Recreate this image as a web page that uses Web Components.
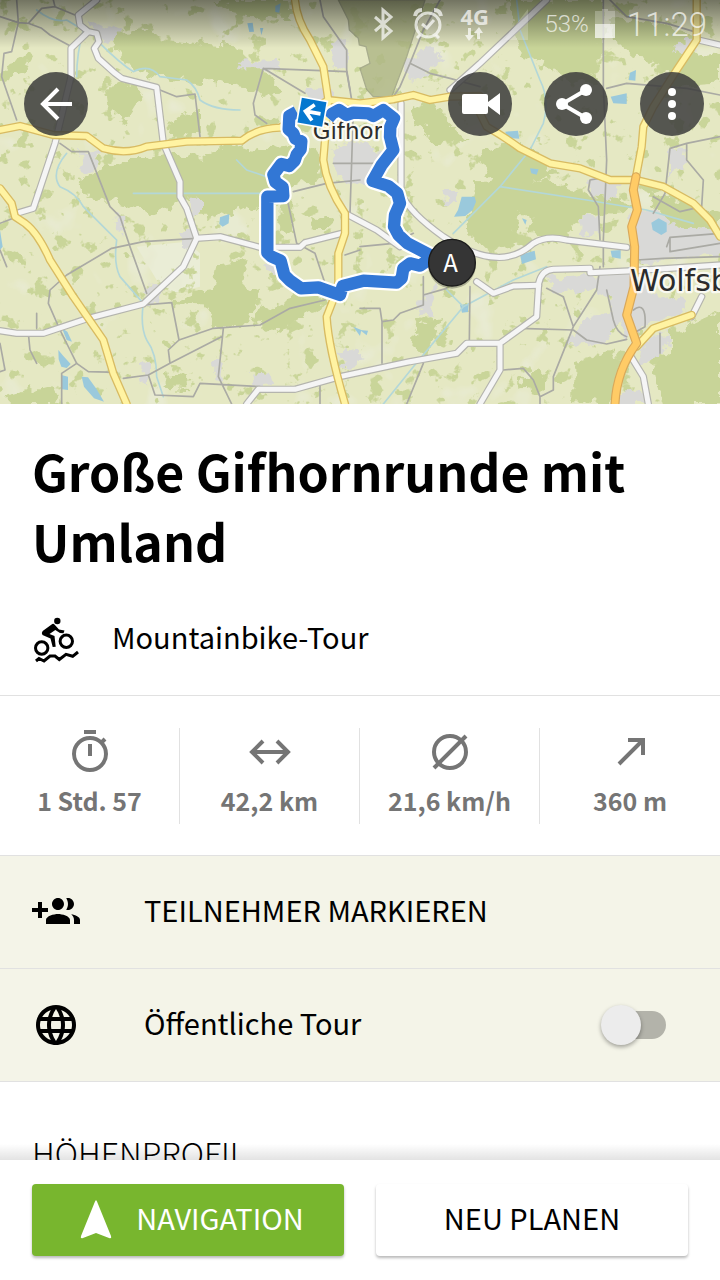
<!DOCTYPE html>
<html lang="de">
<head>
<meta charset="utf-8">
<meta name="viewport" content="width=device-width, initial-scale=1">
<title>Große Gifhornrunde mit Umland</title>
<style>
  html, body {
    height: 100%;
    margin: 0;
  }

  body {
    font-family: "Noto Sans CJK SC", "Noto Sans", sans-serif;
    font-size: 29px;
    color: #000;
    background: #fff;
  }
</style>
</head>
<body>

<tour-page>
  <tour-map slot="map"></tour-map>
  <status-bar slot="status"></status-bar>

  <round-button slot="back" label="Zurück">
    <svg viewBox="0 0 64 64" fill="none" stroke="#fff" stroke-width="4"><path d="M48 32H19M34 17L19 32L34 47"/></svg>
  </round-button>
  <round-button slot="actions" label="Video">
    <svg viewBox="0 0 64 64" fill="#fff"><path d="M16 22H38a2 2 0 0 1 2 2V30L52 21V43L40 34V40a2 2 0 0 1-2 2H16a2 2 0 0 1-2-2V24a2 2 0 0 1 2-2z"/></svg>
  </round-button>
  <round-button slot="actions" label="Teilen">
    <svg viewBox="0 0 64 64" fill="#fff"><path d="M42 18L18 32L42 46" fill="none" stroke="#fff" stroke-width="4"/><circle cx="42" cy="18" r="6"/><circle cx="18" cy="32" r="6"/><circle cx="42" cy="46" r="6"/></svg>
  </round-button>
  <round-button slot="actions" label="Mehr">
    <svg viewBox="0 0 64 64" fill="#fff"><circle cx="32" cy="20" r="4"/><circle cx="32" cy="32" r="4"/><circle cx="32" cy="44" r="4"/></svg>
  </round-button>

  <tour-heading>Große Gifhornrunde mit Umland</tour-heading>

  <list-row compact>
    <svg slot="icon" viewBox="0 0 48 48" fill="none" stroke="#000" stroke-width="3">
      <circle cx="9.700" cy="33" r="6.200"/>
      <circle cx="34.300" cy="26.300" r="6.200"/>
      <circle cx="25.300" cy="6" r="3.200" fill="#000" stroke="none"/>
      <path d="M20.300 9L10.700 16Q9 18 10.500 20L18.500 23.500L20.700 32L23.700 31.700L22.500 21L17.500 19L23.300 15L28 18L31.500 18.300L32.500 15.500L27 14.500L22.700 9.700Q21.500 8.300 20.300 9Z" fill="#000" stroke="none"/>
      <path d="M4 46L7 43.500L12 46L18 41L23 41L27.300 44.500L34 39.300L40.700 41.300L46 37"/>
    </svg>
    Mountainbike-Tour
  </list-row>

  <stat-bar>
    <stat-item>
      <svg slot="icon" viewBox="0 0 48 48" fill="none" stroke="#757575" stroke-width="4"><circle cx="24" cy="26" r="16"/><path d="M18 4H30M24 16V28M35 15L39 11"/></svg>
      1 Std. 57
    </stat-item>
    <stat-item>
      <svg slot="icon" viewBox="0 0 48 48" fill="none" stroke="#757575" stroke-width="4"><path d="M7 24H41M17 13L6 24L17 35M31 13L42 24L31 35"/></svg>
      42,2 km
    </stat-item>
    <stat-item>
      <svg slot="icon" viewBox="0 0 48 48" fill="none" stroke="#757575" stroke-width="4"><circle cx="24" cy="24" r="16"/><path d="M8 40L40 8"/></svg>
      21,6 km/h
    </stat-item>
    <stat-item>
      <svg slot="icon" viewBox="0 0 48 48" fill="none" stroke="#757575" stroke-width="4"><path d="M13 36L36 13M22 12H37V27"/></svg>
      360 m
    </stat-item>
  </stat-bar>

  <list-row action tinted>
    <svg slot="icon" viewBox="0 0 24 24"><path d="M8 10H5V7H3v3H0v2h3v3h2v-3h3v-2zm10 1c1.660 0 2.990-1.340 2.990-3S19.660 5 18 5c-.32 0-.63.050-.91.140.57.810.9 1.790.9 2.860s-.34 2.040-.9 2.860c.28.090.59.140.91.140zm-5 0c1.660 0 2.990-1.340 2.990-3S14.660 5 13 5c-1.660 0-3 1.340-3 3s1.340 3 3 3zm6.620 2.160c.83.730 1.380 1.660 1.380 2.840v2h3v-2c0-1.540-2.370-2.490-4.380-2.840zM13 13c-2 0-6 1-6 3v2h12v-2c0-2-4-3-6-3z"/></svg>
    TEILNEHMER MARKIEREN
  </list-row>

  <switch-row label="Öffentliche Tour">
    <svg slot="icon" viewBox="0 0 24 24"><path d="M11.990 2C6.470 2 2 6.480 2 12s4.470 10 9.990 10C17.520 22 22 17.520 22 12S17.520 2 11.990 2zm6.930 6h-2.950c-.32-1.250-.78-2.450-1.380-3.560 1.840.63 3.370 1.910 4.330 3.560zM12 4.040c.83 1.200 1.480 2.530 1.910 3.960h-3.820c.43-1.430 1.080-2.760 1.910-3.960zM4.260 14C4.100 13.360 4 12.690 4 12s.1-1.360.26-2h3.380c-.080.660-.14 1.320-.14 2 0 .68.060 1.340.14 2H4.260zm.82 2h2.950c.32 1.250.78 2.450 1.380 3.560-1.840-.63-3.370-1.900-4.330-3.560zm2.950-8H5.080c.96-1.660 2.490-2.930 4.330-3.560C8.810 5.550 8.350 6.750 8.030 8zM12 19.960c-.83-1.200-1.480-2.530-1.910-3.960h3.820c-.43 1.430-1.080 2.760-1.910 3.960zM14.340 14H9.660c-.090-.66-.16-1.320-.16-2 0-.68.070-1.350.16-2h4.680c.090.650.16 1.320.16 2 0 .68-.070 1.340-.16 2zm.25 5.560c.6-1.110 1.060-2.310 1.380-3.560h2.950c-.96 1.650-2.490 2.930-4.330 3.560zM16.360 14c.080-.66.14-1.320.14-2 0-.68-.060-1.340-.14-2h3.380c.16.640.26 1.310.26 2s-.1 1.360-.26 2h-3.380z"/></svg>
  </switch-row>

  <section-title>HÖHENPROFIL</section-title>

  <action-button slot="footer" primary>
    <svg slot="icon" viewBox="0 0 48 48" fill="#fff"><path d="M24 4Q25 5 26 8L39 40Q40 43 37 42L24 37L11 42Q8 43 9 40L22 8Q23 5 24 4z"/></svg>
    NAVIGATION
  </action-button>
  <action-button slot="footer">NEU PLANEN</action-button>
</tour-page>

<script>
function attach(el, html) {
  el.attachShadow({mode: 'open'}).innerHTML = html;
}

class TourPage extends HTMLElement {
  constructor() {
    super();
    attach(this, `
      <style>
        :host {
          display: flex;
          flex-direction: column;
          height: 100vh;
        }

        main {
          flex: 1;
          min-height: 0;
          overflow: hidden;
        }

        header {
          position: relative;
        }

        .overlay {
          position: absolute;
          top: 0;
          left: 0;
          right: 0;
        }

        nav {
          display: flex;
          justify-content: space-between;
          padding: 24px 16px 0 24px;
        }

        .actions {
          display: flex;
          gap: 32px;
        }

        footer {
          position: relative;
          display: grid;
          grid-template-columns: 1fr 1fr;
          gap: 32px;
          padding: 24px 32px;
          background: #fff;
        }

        footer::before {
          content: "";
          position: absolute;
          bottom: 100%;
          left: 0;
          right: 0;
          height: 16px;
          background: linear-gradient(rgba(0, 0, 0, 0), rgba(0, 0, 0, .11));
        }
      </style>
      <main>
        <header>
          <slot name="map"></slot>
          <div class="overlay">
            <slot name="status"></slot>
            <nav>
              <slot name="back"></slot>
              <div class="actions"><slot name="actions"></slot></div>
            </nav>
          </div>
        </header>
        <slot></slot>
      </main>
      <footer><slot name="footer"></slot></footer>
    `);
  }
}

class StatusBar extends HTMLElement {
  constructor() {
    super();
    attach(this, `
      <style>
        :host {
          display: flex;
          justify-content: flex-end;
          align-items: center;
          gap: 16px;
          height: 48px;
          padding-right: 13px;
          font-family: Roboto, sans-serif;
          color: rgba(255, 255, 255, .7);
          background: linear-gradient(rgba(0, 0, 0, .5), rgba(0, 0, 0, 0));
        }

        svg {
          display: block;
          height: 48px;
          fill: currentColor;
        }

        .network {
          font: bold 22px/20px "Open Sans", sans-serif;
          width: 28px;
          text-align: center;
        }

        .network svg {
          height: 16px;
          margin: 0 auto;
        }

        .battery {
          display: flex;
          align-items: center;
          gap: 6px;
          font-size: 24px;
          font-weight: 300;
        }

        .clock {
          font-size: 33px;
          font-weight: 300;
          margin-left: -4px;
        }
      </style>
      <svg viewBox="0 0 24 48" width="24"><path d="M3 17L19 31L11 38V10L19 17L3 31" fill="none" stroke="currentColor" stroke-width="3"/></svg>
      <svg viewBox="0 0 32 48" width="32" fill="none">
        <g fill="none" stroke="currentColor" stroke-width="3"><circle cx="16" cy="25" r="12"/><path d="M10 24L15 28L22 20"/><path d="M3 16Q4 10 10 10M22 10Q28 10 29 16" stroke-width="4"/><path d="M8 35L5 38M24 35L27 38"/></g>
      </svg>
      <div class="network">4G
        <svg viewBox="0 0 20 16" width="20"><path d="M4 2H7V9H10L5 15L1 9H4zM13 13V7H10L15 1L19 7H16V13z"/></svg>
      </div>
      <svg viewBox="0 0 24 48" width="24"><path d="M24 9V40H0z" opacity=".3"/></svg>
      <div class="battery">53%
        <svg viewBox="0 0 20 48" width="20"><path d="M7 9H13V11H20V24H0V11H7z" opacity=".35"/><path d="M0 24H20V38H0z"/></svg>
      </div>
      <div class="clock">11:29</div>
    `);
  }
}

class RoundButton extends HTMLElement {
  constructor() {
    super();
    attach(this, `
      <style>
        :host {
          display: block;
        }

        button {
          display: block;
          width: 64px;
          height: 64px;
          padding: 0;
          border: none;
          border-radius: 50%;
          background: rgba(60, 60, 60, .85);
          cursor: pointer;
        }

        ::slotted(svg) {
          display: block;
          width: 64px;
          height: 64px;
        }
      </style>
      <button type="button"><slot></slot></button>
    `);
  }

  connectedCallback() {
    this.shadowRoot.querySelector('button').setAttribute('aria-label', this.getAttribute('label'));
  }
}

class TourHeading extends HTMLElement {
  constructor() {
    super();
    attach(this, `
      <style>
        :host {
          display: block;
          padding: 31px 32px 8px;
        }

        h1 {
          margin: 0;
          font-size: 50px;
          line-height: 70px;
          font-weight: bold;
        }
      </style>
      <h1><slot></slot></h1>
    `);
  }
}

const rowStyle = `
  :host {
    display: block;
    border-bottom: 1px solid #e1e1e1;
  }

  .row {
    box-sizing: border-box;
    display: flex;
    align-items: center;
    gap: 64px;
    width: 100%;
    min-height: 112px;
    padding: 0 54px 0 32px;
    border: none;
    background: none;
    font: inherit;
    color: inherit;
    text-align: left;
  }

  .text {
    flex: 1;
    padding-bottom: 6px;
  }

  ::slotted(svg) {
    flex: none;
    width: 48px;
    height: 48px;
  }
`;

class ListRow extends HTMLElement {
  connectedCallback() {
    if(this.shadowRoot) {
      return;
    }

    // rows that trigger something are buttons, the others plain boxes
    let tag = this.hasAttribute('action') ? 'button' : 'div';
    attach(this, `
      <style>
        ${rowStyle}
        :host([tinted]) {
          background: #f4f4e8;
        }

        :host([compact]) .row {
          gap: 32px;
        }
      </style>
      <${tag} class="row"><slot name="icon"></slot><span class="text"><slot></slot></span></${tag}>
    `);
  }
}

class SwitchRow extends HTMLElement {
  connectedCallback() {
    if(this.shadowRoot) {
      return;
    }

    attach(this, `
      <style>
        ${rowStyle}
        :host {
          background: #f4f4e8;
        }

        input {
          appearance: none;
          position: relative;
          width: 65px;
          height: 40px;
          margin: 0;
          cursor: pointer;
        }

        input::before {
          content: "";
          position: absolute;
          inset: 6px 0 6px 8px;
          border-radius: 14px;
          background: #b3b3aa;
        }

        input::after {
          content: "";
          position: absolute;
          top: 0;
          left: 0;
          width: 40px;
          height: 40px;
          border-radius: 50%;
          background: #ececec;
          box-shadow: 0 2px 4px rgba(0, 0, 0, .35);
        }

        input:checked::after {
          left: 25px;
          background: #78b62e;
        }
      </style>
      <div class="row">
        <slot name="icon"></slot>
        <label class="text" for="toggle">${this.getAttribute('label')}</label>
        <input type="checkbox" id="toggle" role="switch">
      </div>
    `);
  }
}

class StatBar extends HTMLElement {
  constructor() {
    super();
    attach(this, `
      <style>
        :host {
          display: grid;
          grid-template-columns: repeat(4, 1fr);
          padding: 32px 0 31px;
          border-bottom: 1px solid #e1e1e1;
        }

        ::slotted(:not(:last-child)) {
          border-right: 1px solid #e1e1e1;
        }
      </style>
      <slot></slot>
    `);
  }
}

class StatItem extends HTMLElement {
  constructor() {
    super();
    attach(this, `
      <style>
        :host {
          display: flex;
          flex-direction: column;
          align-items: center;
          font-size: 25px;
          line-height: 48px;
          font-weight: bold;
          color: #757575;
          white-space: nowrap;
        }

        ::slotted(svg) {
          width: 48px;
          height: 48px;
        }
      </style>
      <slot name="icon"></slot>
      <span><slot></slot></span>
    `);
  }
}

class SectionTitle extends HTMLElement {
  constructor() {
    super();
    attach(this, `
      <style>
        :host {
          display: block;
          padding: 46px 32px;
        }

        h2 {
          margin: 0;
          font-size: 32px;
          line-height: 48px;
          font-weight: 300;
        }
      </style>
      <h2><slot></slot></h2>
    `);
  }
}

class ActionButton extends HTMLElement {
  constructor() {
    super();
    attach(this, `
      <style>
        :host {
          display: block;
        }

        button {
          display: flex;
          align-items: center;
          justify-content: center;
          gap: 16px;
          width: 100%;
          height: 72px;
          padding: 0;
          border: none;
          border-radius: 4px;
          background: #fff;
          box-shadow: 0 2px 3px rgba(0, 0, 0, .28);
          font: inherit;
          color: #000;
          cursor: pointer;
        }

        :host([primary]) button {
          background: #78b62e;
          color: #fff;
        }

        .text {
          padding-bottom: 6px;
        }

        ::slotted(svg) {
          width: 48px;
          height: 48px;
        }
      </style>
      <button type="button"><slot name="icon"></slot><span class="text"><slot></slot></span></button>
    `);
  }
}

// Map geometry, in units of a 2160 x 1212 canvas
const forests = [
  '340,100 420,92 520,122 600,130 720,140 740,180 820,230 850,285 800,290 740,262 640,240 600,252 480,228 400,215 350,150',
  '320,265 400,245 430,290 390,340 370,370 330,330',
  '230,540 380,480 440,480 500,460 600,470 680,430 760,450 900,430 960,470 950,540 860,560 800,640 740,620 620,660 560,600 460,640 380,610 260,590',
  '10,190 100,165 70,215 10,240',
  '650,790 740,780 730,850 780,880 740,975 650,985 620,920 520,915 560,885 640,870',
  '790,930 870,890 940,870 980,910 890,960 830,1000 750,960',
  '500,1120 560,1125 565,1165 490,1160',
  '20,1190 150,1155 180,1212 20,1212',
  '640,0 860,0 880,60 800,50 700,40',
  '840,600 880,600 880,700 830,690',
  '930,640 1000,650 1000,690 940,690',
  '500,360 600,330 600,400 520,410',
  '1530,0 1810,0 1810,80 1800,200 1770,260 1700,230 1640,200 1560,170',
  '1830,50 1960,70 2080,110 2030,190 1900,175 1840,120',
  '1960,180 2160,160 2160,250 2020,260',
  '1420,550 1640,540 1780,590 1900,610 1870,640 1740,650 1680,730 1600,700 1590,640 1550,640 1540,740 1460,750 1400,690',
  '1940,590 2040,600 2160,640 2160,690 2020,680',
  '1440,450 1560,430 1680,520 1480,575',
  '2010,1000 2160,930 2160,1212 1990,1212 1960,1100 2010,1060',
  '1720,1090 1830,1060 1870,1090 1830,1212 1720,1200',
  '1250,970 1320,960 1280,1060 1240,1040',
  '1560,1130 1640,1110 1640,1180 1570,1170',
  '1230,330 1290,300 1330,350 1400,420 1300,430'
];

const towns = [
  '260,60 360,90 350,115 290,130', '240,450 290,455 290,510 245,515', '570,590 600,590 600,650 575,650',
  '540,690 580,690 575,740 540,735', '440,850 485,860 480,905 440,915', '710,185 830,180 840,205 720,205',
  '990,130 1040,125 1050,210 1000,200', '920,265 980,260 1010,330 920,310', '1000,440 1100,420 1170,500 1080,560 1010,530',
  '790,790 840,785 830,820 790,815', '420,1090 450,1090 450,1150 425,1140', '640,1080 665,1080 665,1150 640,1140',
  '750,1130 810,1120 820,1150 760,1160', '1020,1050 1070,1040 1090,1090 1030,1110', '340,650 370,650 370,700 345,690',
  '1210,180 1290,150 1330,170 1260,240 1210,230', '1330,570 1380,570 1370,610 1335,610', '1740,650 1800,650 1800,700 1745,700',
  '1900,650 1960,620 2030,680 2160,690 2160,760 1920,790 1900,730', '1770,540 1860,545 1840,600 1780,590',
  '1640,830 1900,820 1960,880 2040,900 2060,940 1960,960 1880,1010 1860,960 1810,1030 1700,1040 1740,960 1840,940 1830,880 1720,870 1650,880',
  '1930,1010 2010,1000 1990,1070 1920,1080',
  '2010,440 2060,440 2050,500 2010,530', '2030,130 2080,120 2080,160 2040,165', '1270,880 1310,860 1290,950 1260,950',
  '1860,1180 1930,1170 1940,1212 1860,1212'
];

const lakes = [
  '660,652 688,642 686,670 668,680 658,672', '175,1050 190,1068 212,1092 200,1104 184,1100 176,1078', '184,1125 204,1130 204,1170 186,1168',
  '245,1130 264,1132 290,1168 312,1205 282,1195 252,1160', '742,70 758,68 762,95 748,96', '780,84 790,84 784,106',
  '186,985 202,995 216,1025 200,1020', '0,690 8,740 0,750', '1060,980 1084,990 1080,1008',
  '1385,590 1424,590 1428,605 1418,630 1396,648 1362,650 1374,630', '1954,668 1976,655 2000,668 2000,695 1984,705 1958,690',
  '1560,764 1604,752 1608,778 1566,792', '1590,505 1616,508 1610,524 1594,520', '1516,395 1554,392 1558,416 1520,414',
  '1832,290 1880,280 1880,312 1840,310', '1890,218 1908,210 1906,242 1886,240', '1832,752 1862,750 1862,776 1836,772',
  '1380,915 1406,912 1404,936 1386,938', '1566,655 1580,660 1576,674', '1080,990 1104,992 1100,1006', '826,18 842,10 838,38 826,36'
];

const streams = [
  'M110 30Q160 70 200 60L250 90Q230 160 230 230M300 130Q360 190 400 215Q450 190 480 230L560 240Q590 260 600 300Q640 330 720 330',
  'M200 460Q150 520 180 560Q230 580 250 620L300 670L350 720Q340 790 360 830L430 910Q420 980 440 1020Q470 1060 470 1130L490 1190',
  'M1550 0L1560 90L1620 240Q1650 300 1630 370L1590 450L1500 560L1360 700M1640 800L1540 840L1390 920L1240 1100L1150 1212M1390 920L1340 870',
  'M1500 560L1760 600L1940 630L2080 670M710 480L740 510L800 530M400 580H860'
];

const lanes = [
  'M0 50L55 68L85 70L125 25L165 20L225 45M85 70L125 85L150 105L215 140M55 68L35 155L12 160L5 230L50 360M55 68L50 0M165 20L160 0',
  'M180 430L215 455H265L330 620L360 650L390 740L440 880M590 715L430 725L335 745L200 825L150 870L145 910L180 990L230 1090L265 1115L350 1117',
  'M480 270L530 290L585 282L600 410M790 205L1040 215L1050 270M790 205L915 280M790 205L760 310L765 345L800 370M860 590L890 730L945 760L975 850L990 880',
  'M430 915L515 908L537 1020L640 985L780 975L870 925L975 900M537 1020L505 1050L510 1090L665 1010M670 985L655 1130L695 1212M370 1135L445 1125L465 1185L580 1190L600 1150L780 1160M445 1125L510 1090',
  'M0 1030L15 1110L0 1115M110 940V985M85 1000L90 1050L110 1090M230 1090L185 1120V1212M0 750L20 800M0 670L40 655',
  'M960 0L970 50L1040 150V210L1060 330L1050 640M880 575L980 550L1080 540M1000 490H1160M1080 740L1180 730L1240 700M1035 765L1080 750',
  'M1230 190L1290 220L1350 235L1440 260M1320 0L1270 90L1230 190L1200 260L1180 290M1810 0V260L1820 480L1810 720V800M1820 265L1880 250L2060 265L2160 285M1830 0L1880 50L2000 70L2100 100',
  'M2160 410L2060 430L2010 445L1995 580L1960 640M2060 430V480L2110 540L2105 620L2040 635L1960 590M1830 530L1770 540L1765 570L1795 620L1800 720',
  'M1080 925L1140 925L1146 965L1180 960L1200 940L1270 915V830M1146 965V1090M1410 860L1408 1020M1270 885L1340 865M1560 985L1720 990L1760 1020L1820 1032L1880 1018',
  'M1640 865L1690 890L1720 980L1790 870L1800 800M1720 980L1660 1130L1660 1170L1620 1190L1600 1140L1570 1105L1510 1110M1820 870L1840 960Q1850 1000 1880 1010M1910 780L1990 775L2160 770M2000 740L2010 712L2160 700M2010 712V755L2160 730M1900 930Q1940 900 1935 980L1900 1000M1980 1000V1060M1270 1090L1220 1212M1620 1190V1212M960 1150V1212'
];

const mainRoads = [
  'M290 0L235 45L240 75L265 95L213 145V230M265 95L290 100L297 125L283 145L295 175L345 220L365 235L470 262L490 430L540 545V590L560 625L590 715L550 800L430 912L265 955L130 1000H50L0 992',
  'M213 230L165 430L100 625L50 640M590 715L660 710L780 742L900 742L915 728L1025 700M1035 640L1130 690L1200 740',
  'M740 1212L775 1168H885L1020 1130L1230 1085L1370 1060L1400 1030H1500L1610 950L1616 850Q1625 810 1660 808L1770 805L1770 818L1900 812L2160 795M1500 1030V1110L1440 1212',
  'M1640 0L1440 190L1350 270M1203 310V580Q1230 640 1330 710Q1420 770 1490 772Q1550 775 1600 730Q1640 705 1700 720L1880 742M1430 845L1480 880L1540 858L1616 856',
  'M2095 120L2160 135M1890 1065L1930 1130L1945 1212M2075 950L2105 890'
];

const trunkRoads = [
  'M885 0Q890 60 930 120L970 200L985 300L970 480Q980 560 1035 640L1035 700L1015 760V860L980 950Q985 1040 1035 1212',
  'M0 390L60 378L160 405L260 408Q290 430 310 445Q380 465 440 440L560 425L725 422Q770 385 840 383L985 300L1080 310L1180 298L1240 285L1290 300L1350 290L1440 288V340L1460 380Q1520 415 1560 445L1650 490L1740 505L1830 540H1910L1990 560L2080 610L2130 660L2160 710',
  'M0 565L35 610L45 650L75 670Q115 700 150 780L220 890L310 1020L340 1120L380 1212',
  'M2090 0V120L2030 210L1960 320L1930 380L1925 440L1908 530M1910 1040L1960 985L2075 945'
];

const motorways = [
  'M1908 530L1900 570L1912 630L1895 680L1904 740L1902 860L1880 945L1910 1030Q1850 1110 1845 1212'
];

const tourPath = 'M890 336L868 348L866 388L880 400L886 416L904 424L902 448L890 464L884 482L868 498L844 492L820 524L826 546L848 562L850 588L802 590V758L815 770L842 782L853 825L870 842L903 865L955 862L1020 885L1028 858L1090 842L1190 848L1205 835L1210 805L1230 790L1260 797L1300 770L1222 730L1196 706L1182 680L1185 645L1200 610L1192 580L1165 558L1118 543L1145 495L1180 450L1170 410L1171 380L1182 355L1150 330L1120 348L1105 340L1060 338L1040 345L1017 330L998 340L985 355';

function shapes(list, fill) {
  return `<g fill="${fill}">${list.map(points => `<polygon points="${points}"/>`).join('')}</g>`;
}

function lines(list, color, width) {
  return `<g stroke="${color}" stroke-width="${width}">${list.map(d => `<path d="${d}"/>`).join('')}</g>`;
}

class TourMap extends HTMLElement {
  constructor() {
    super();
    attach(this, `
      <style>
        :host {
          display: block;
          overflow: hidden;
        }

        svg {
          display: block;
          width: 100%;
          height: auto;
        }

        .place {
          font-family: "DejaVu Sans", sans-serif;
          fill: #2c2c2c;
          stroke: #fff;
          stroke-width: 14px;
          stroke-opacity: .8;
          stroke-linejoin: round;
          paint-order: stroke;
        }
      </style>
      <svg viewBox="0 0 2160 1212" role="img" aria-label="Karte der Tour">
        <defs>
          <filter id="rough" x="-5%" y="-5%" width="110%" height="110%" color-interpolation-filters="sRGB">
            <feTurbulence type="fractalNoise" baseFrequency=".03" numOctaves="3" seed="4"/>
            <feDisplacementMap in="SourceGraphic" scale="50" xChannelSelector="R" yChannelSelector="G"/>
          </filter>
          <filter id="groves" x="0" y="0" width="100%" height="100%" color-interpolation-filters="sRGB">
            <feTurbulence type="fractalNoise" baseFrequency=".02" numOctaves="4" seed="11"/>
            <feColorMatrix values="0 0 0 0 .79  0 0 0 0 .835  0 0 0 0 .6  16 0 0 0 -10.2"/>
          </filter>
          <filter id="meadows" x="0" y="0" width="100%" height="100%" color-interpolation-filters="sRGB">
            <feTurbulence type="fractalNoise" baseFrequency=".008" numOctaves="3" seed="7"/>
            <feColorMatrix values="0 0 0 0 .91  0 0 0 0 .92  0 0 0 0 .82  0 6 0 0 -3.8"/>
          </filter>
        </defs>
        <rect width="2160" height="1212" fill="#e5e8c3"/>
        <polygon points="410,740 560,725 600,760 600,860 520,880 470,840" fill="#eaedd6"/>
        <rect width="2160" height="1212" filter="url(#meadows)"/>
        <rect width="2160" height="1212" filter="url(#groves)"/>
        <g filter="url(#rough)">
          ${shapes(forests, '#c8d498')}
          ${shapes(towns, '#d9d9d7')}
        </g>
        <polygon points="1015,0 1045,60 1048,90 1075,115 1078,135 1098,140 1110,190 1080,205 1100,268 1120,290 1175,290 1220,170 1275,0" fill="#aeb685" opacity=".8" stroke="#9a9f80" stroke-width="4"/>
        ${shapes(lakes, '#9ac9dc')}
        <g fill="none" stroke-linecap="round" stroke-linejoin="round">
          ${lines(streams, '#b3d7d8', 5)}
          ${lines(lanes, '#aaaaa4', 5)}
          ${lines(mainRoads, '#b4b4ae', 22)}
          ${lines(mainRoads, '#f5f5f5', 15)}
          ${lines(trunkRoads, '#d8bb62', 25)}
          ${lines(trunkRoads, '#fff3a2', 17)}
          ${lines(motorways, '#d9a85a', 27)}
          ${lines(motorways, '#ffcb66', 20)}
        </g>
        <text class="place" x="938" y="418" font-size="69">Gifhor</text>
        <text class="place" x="1890" y="872" font-size="90">Wolfsb</text>
        <g fill="none" stroke-linejoin="round">
          <path d="${tourPath}" stroke="#fff" stroke-width="50"/>
          <path d="${tourPath}" stroke="#3277d5" stroke-width="37"/>
        </g>
        <g transform="translate(936 337) rotate(10)">
          <rect x="-40" y="-40" width="80" height="80" fill="#0577cf" stroke="#fff" stroke-width="5"/>
          <path d="M26 0H-20M4 -24L-20 0L4 24" fill="none" stroke="#fff" stroke-width="11"/>
        </g>
        <circle cx="1356" cy="794" r="72" fill="#000" opacity=".25"/>
        <circle cx="1356" cy="788" r="70" fill="#353535" stroke="#1b1b1b" stroke-width="4"/>
        <text x="1352" y="815" font-size="72" text-anchor="middle" fill="#fff">A</text>
      </svg>
    `);
  }
}

customElements.define('tour-page', TourPage);
customElements.define('tour-map', TourMap);
customElements.define('status-bar', StatusBar);
customElements.define('round-button', RoundButton);
customElements.define('tour-heading', TourHeading);
customElements.define('list-row', ListRow);
customElements.define('switch-row', SwitchRow);
customElements.define('stat-bar', StatBar);
customElements.define('stat-item', StatItem);
customElements.define('section-title', SectionTitle);
customElements.define('action-button', ActionButton);
</script>
</body>
</html>
